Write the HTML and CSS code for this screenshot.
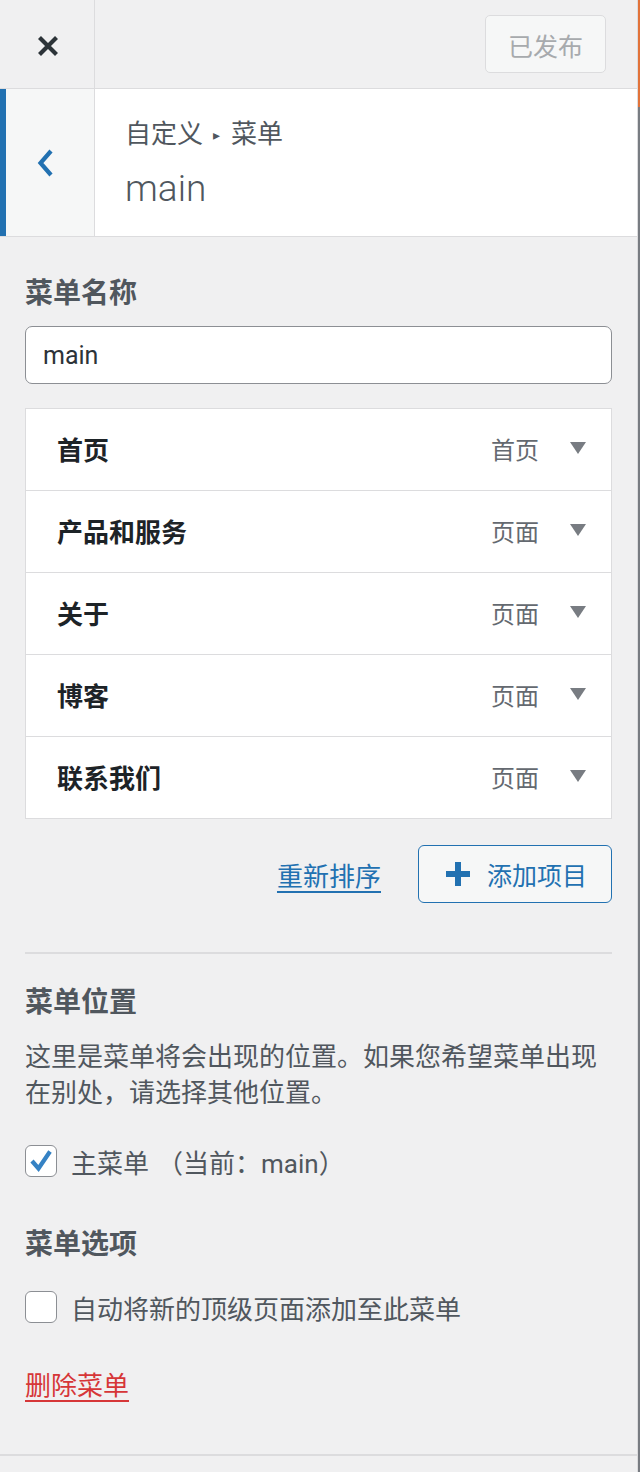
FILE: index.html
```html
<!DOCTYPE html>
<html>
  <head>
    <title>自定义菜单</title>
    <link rel="stylesheet" href="styles.css">
  </head>
  <body>
    <div class="panel">
      <div class="header">
        <button class="close-button" aria-label="关闭">
          <svg width="22" height="22" viewBox="0 0 22 22">
            <path d="M2.5 2.5 L19.5 19.5 M19.5 2.5 L2.5 19.5" stroke="#2c3338" stroke-width="4.2" fill="none"/>
          </svg>
        </button>
        <button class="publish-button">已发布</button>
      </div>

      <div class="section-title">
        <button class="back-button" aria-label="返回">
          <svg width="18" height="30" viewBox="0 0 18 30">
            <path d="M15 3 L4.5 15 L15 27" stroke="#2271b1" stroke-width="4.2" fill="none"/>
          </svg>
        </button>
        <div class="title-text">
          <p class="breadcrumb">自定义 <span class="crumb-arrow">▸</span> 菜单</p>
          <p class="title-name">main</p>
        </div>
      </div>

      <div class="content">
        <p class="heading name-heading">菜单名称</p>
        <div class="name-input">main</div>

        <ul class="menu-items">
          <li class="menu-item">
            <span class="item-title">首页</span>
            <span class="item-type">首页</span>
            <svg class="item-arrow" width="16" height="12" viewBox="0 0 16 12"><path d="M0 0 H16 L8 12 Z" fill="#787c82"/></svg>
          </li>
          <li class="menu-item">
            <span class="item-title">产品和服务</span>
            <span class="item-type">页面</span>
            <svg class="item-arrow" width="16" height="12" viewBox="0 0 16 12"><path d="M0 0 H16 L8 12 Z" fill="#787c82"/></svg>
          </li>
          <li class="menu-item">
            <span class="item-title">关于</span>
            <span class="item-type">页面</span>
            <svg class="item-arrow" width="16" height="12" viewBox="0 0 16 12"><path d="M0 0 H16 L8 12 Z" fill="#787c82"/></svg>
          </li>
          <li class="menu-item">
            <span class="item-title">博客</span>
            <span class="item-type">页面</span>
            <svg class="item-arrow" width="16" height="12" viewBox="0 0 16 12"><path d="M0 0 H16 L8 12 Z" fill="#787c82"/></svg>
          </li>
          <li class="menu-item">
            <span class="item-title">联系我们</span>
            <span class="item-type">页面</span>
            <svg class="item-arrow" width="16" height="12" viewBox="0 0 16 12"><path d="M0 0 H16 L8 12 Z" fill="#787c82"/></svg>
          </li>
        </ul>

        <div class="item-actions">
          <a class="reorder-link" href="#">重新排序</a>
          <button class="add-button">
            <svg width="26" height="26" viewBox="0 0 26 26">
              <path d="M13 1 V25 M1 13 H25" stroke="#2271b1" stroke-width="6" fill="none"/>
            </svg>
            添加项目
          </button>
        </div>

        <div class="separator"></div>

        <p class="heading location-heading">菜单位置</p>
        <p class="description">这里是菜单将会出现的位置。如果您希望菜单出现在别处，请选择其他位置。</p>

        <label class="check-row location-check">
          <span class="checkbox">
            <svg width="24" height="24" viewBox="0 0 24 24">
              <path d="M3 12 L9.5 19.5 L21 2.5" stroke="#3582c4" stroke-width="4.2" fill="none"/>
            </svg>
          </span>
          主菜单 <span class="current">（当前：main）</span>
        </label>

        <p class="heading options-heading">菜单选项</p>

        <label class="check-row options-check">
          <span class="checkbox"></span>
          自动将新的顶级页面添加至此菜单
        </label>

        <a class="delete-link" href="#">删除菜单</a>
      </div>

      <div class="footer-line"></div>
    </div>
    <div class="preview-edge"></div>
  </body>
</html>
```

FILE: styles.css
```css
body {
  margin: 0;
  display: flex;
  background-color: #f0f0f1;
  font-family: Roboto, "Noto Sans CJK SC", sans-serif;
  color: #50575e;
}

p {
  margin: 0;
}

.panel {
  width: 637px;
  min-height: 1472px;
  background-color: #f0f0f1;
  border-right: 1px solid #dcdcde;
}

.preview-edge {
  width: 2px;
  background: linear-gradient(#e2733a 0, #e2733a 107px, #787c82 107px);
}

.header {
  display: flex;
  align-items: center;
  height: 88px;
  border-bottom: 1px solid #dcdcde;
}

.close-button {
  width: 95px;
  height: 88px;
  border: none;
  border-right: 1px solid #dcdcde;
  background-color: transparent;
  display: flex;
  align-items: center;
  justify-content: center;
  padding: 4px 0 0 2px;
}

.publish-button {
  margin-left: auto;
  margin-right: 31px;
  width: 121px;
  height: 58px;
  border: 1px solid #dcdcde;
  border-radius: 5px;
  background-color: #f6f7f7;
  color: #a7aaad;
  font-family: "Noto Sans CJK SC", sans-serif;
  font-size: 25px;
  padding-top: 2px;
}

.section-title {
  display: flex;
  height: 147px;
  background-color: white;
  border-bottom: 1px solid #dcdcde;
}

.back-button {
  width: 95px;
  border: none;
  border-left: 6px solid #2271b1;
  border-right: 1px solid #dcdcde;
  background-color: #f6f7f7;
  display: flex;
  align-items: center;
  justify-content: center;
  padding: 0 10px 0 0;
}

.title-text {
  padding: 27px 0 0 30px;
}

.breadcrumb {
  font-size: 26px;
  line-height: 36px;
  color: #50575e;
  word-spacing: 4px;
}

.crumb-arrow {
  font-size: 14px;
  vertical-align: 3px;
  color: #50575e;
}

.title-name {
  margin-top: 14px;
  font-size: 37px;
  font-weight: 300;
  line-height: 44px;
  color: #50575e;
}

.content {
  padding: 0 25px;
}

.heading {
  font-size: 28px;
  font-weight: bold;
  line-height: 36px;
  color: #50575e;
}

.name-heading {
  margin-top: 39px;
}

.name-input {
  margin-top: 14px;
  height: 56px;
  border: 1px solid #8c8f94;
  border-radius: 7px;
  background-color: white;
  padding-left: 17px;
  display: flex;
  align-items: center;
  font-size: 25px;
  color: #2c3338;
}

.menu-items {
  list-style: none;
  margin: 24px 0 0;
  padding: 0;
  border: 1px solid #dcdcde;
  background-color: white;
}

.menu-item {
  display: flex;
  align-items: center;
  height: 78px;
  padding: 0 25px 3px 31px;
  border-top: 1px solid #dcdcde;
}

.menu-item:first-child {
  border-top: none;
}

.item-title {
  font-size: 26px;
  font-weight: bold;
  color: #1d2327;
}

.item-type {
  margin-left: auto;
  margin-right: 31px;
  font-size: 24px;
  color: #646970;
}

.item-actions {
  display: flex;
  align-items: center;
  justify-content: flex-end;
  margin-top: 26px;
}

.reorder-link {
  color: #2271b1;
  font-size: 26px;
  text-underline-offset: 5px;
  margin-right: 37px;
}

.add-button {
  width: 194px;
  height: 58px;
  border: 1px solid #2271b1;
  border-radius: 6px;
  background-color: #f6f7f7;
  color: #2271b1;
  font-family: "Noto Sans CJK SC", sans-serif;
  font-size: 25px;
  display: flex;
  align-items: center;
  gap: 16px;
  padding: 0 0 0 26px;
}

.separator {
  margin-top: 49px;
  border-top: 2px solid #dcdcde;
}

.location-heading {
  margin-top: 31px;
}

.description {
  margin-top: 18px;
  font-size: 26px;
  line-height: 36px;
}

.check-row {
  display: flex;
  align-items: center;
  height: 36px;
  font-size: 26px;
  color: #50575e;
}

.checkbox {
  width: 30px;
  height: 30px;
  border: 1px solid #8c8f94;
  border-radius: 6px;
  background-color: white;
  margin-right: 14px;
  display: flex;
  align-items: center;
  justify-content: center;
}

.current {
  margin-left: 8px;
}

.location-check {
  margin-top: 32px;
}

.options-heading {
  margin-top: 48px;
}

.options-check {
  margin-top: 26px;
}

.delete-link {
  display: block;
  margin-top: 43px;
  color: #d63638;
  font-size: 26px;
  line-height: 36px;
  text-underline-offset: 5px;
}

.footer-line {
  margin-top: 50px;
  border-top: 2px solid #dcdcde;
}
```
